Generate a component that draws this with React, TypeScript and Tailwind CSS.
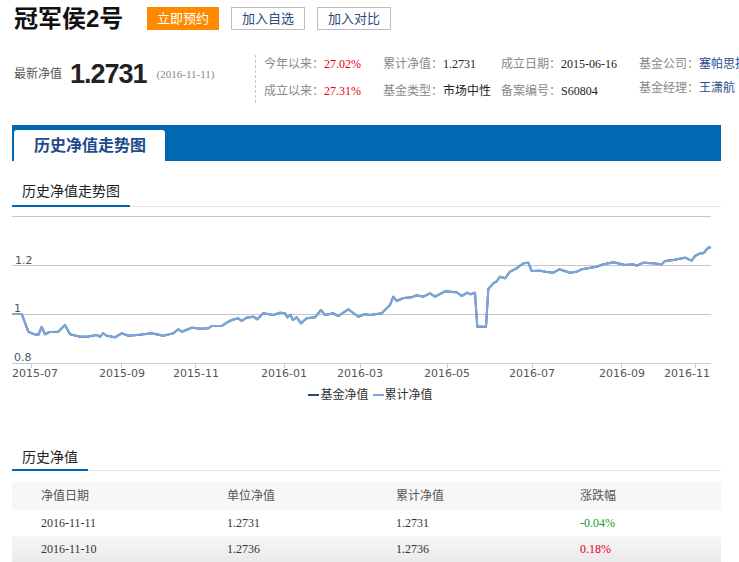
import React from "react";

const SANS = { fontFamily: '"Liberation Sans", "Noto Sans CJK SC", sans-serif' };
const SERIF = { fontFamily: '"Liberation Serif", "Noto Sans CJK SC", serif' };
const CHART_FONT = '"DejaVu Sans", "Noto Sans CJK SC", sans-serif';

// traced from the reference, page pixel coordinates
const POINTS: [number, number][] = [
  [12, 314], [21.7, 314], [28.3, 331.7], [33.3, 334], [38.3, 335], [41.7, 327], [45, 334.3],
  [49.3, 332], [58.3, 331.7], [65, 325], [70, 334.3], [80, 336.7], [86.7, 336.7], [96.7, 335],
  [100, 336.7], [103.3, 333.3], [106.7, 335.7], [115, 337.3], [121.7, 333.3], [128.3, 335.7],
  [140, 334.7], [151.7, 333.3], [163.3, 335.7], [173.3, 333.3], [178.3, 329.3], [181.7, 331.7],
  [191.7, 327.7], [200, 328.7], [208.3, 328.3], [211.7, 326], [221.7, 326], [226.7, 322.7],
  [231.7, 320], [238.3, 318.3], [241.7, 321], [246.7, 317.7], [253.3, 316.7], [257.3, 319.3],
  [263.3, 313.3], [273.3, 315], [280, 312.7], [285, 313.3], [287.3, 317.3], [290.7, 314.7],
  [292.7, 320], [296.7, 317.3], [301, 323.3], [306.7, 318.3], [315, 317.3], [321, 310],
  [325, 315], [333.3, 313.3], [338.3, 316], [348.3, 309.3], [358.3, 316.7], [365, 314],
  [370, 315], [381.7, 313.3], [390, 305], [393.3, 296.7], [396.7, 301], [403.3, 298],
  [411.7, 297.3], [416.7, 295.3], [423.3, 296.7], [430, 293.3], [435, 296.7], [445, 291.3],
  [456.7, 292.3], [461.7, 296], [467.3, 292.7], [470.7, 294.3], [475, 292.7], [477.3, 326.7],
  [486, 326.7], [488.3, 289], [493.3, 283.3], [496.7, 281.3], [500, 276.7], [505, 278.3],
  [510, 271.7], [516.7, 268.3], [523.3, 263.3], [528.3, 262.7], [531.7, 271], [540, 270.7],
  [546.7, 272], [553.3, 272.7], [559.3, 269.3], [570, 272.7], [576.7, 271.7], [581.7, 269.3],
  [596.7, 266.7], [603.3, 264.3], [613.3, 262.3], [618.3, 263.3], [625, 265], [633.3, 264.3],
  [636.7, 265.7], [643.3, 262.7], [653.3, 263.3], [661.7, 264.3], [665, 261], [673.3, 260],
  [685, 257.7], [691.7, 260.7], [695, 256], [700, 253.3], [703.3, 253.3], [708.3, 247.7],
  [711, 247.3],
];

const TICKS: { x: number; label: string; anchor: "start" | "middle" | "end"; tx: number }[] = [
  { x: 31, label: "2015-07", anchor: "start", tx: 12 },
  { x: 121, label: "2015-09", anchor: "middle", tx: 122 },
  { x: 195, label: "2015-11", anchor: "middle", tx: 196 },
  { x: 284, label: "2016-01", anchor: "middle", tx: 284 },
  { x: 360, label: "2016-03", anchor: "middle", tx: 360 },
  { x: 447, label: "2016-05", anchor: "middle", tx: 447 },
  { x: 532, label: "2016-07", anchor: "middle", tx: 532 },
  { x: 621, label: "2016-09", anchor: "middle", tx: 622 },
  { x: 695, label: "2016-11", anchor: "end", tx: 710 },
];

const ROWS = [
  { date: "2016-11-11", unit: "1.2731", total: "1.2731", change: "-0.04%", up: false },
  { date: "2016-11-10", unit: "1.2736", total: "1.2736", change: "0.18%", up: true },
];

function InfoItem({ label, value, tone }: { label: string; value: string; tone: "red" | "dark" | "cjk" | "blue" }) {
  const color =
    tone === "red" ? "text-[#e60012]" : tone === "blue" ? "text-[#1f4e8c]" : "text-[#222]";
  return (
    <div className="flex h-[18px] items-center whitespace-nowrap text-[12px]">
      <span className="w-[60px] shrink-0 text-[#888]" style={SANS}>{label}</span>
      <span className={color} style={tone === "cjk" || tone === "blue" ? SANS : SERIF}>{value}</span>
    </div>
  );
}

function NavChart() {
  const d = POINTS.map((p, i) => `${i ? "L" : "M"}${p[0]} ${p[1]}`).join(" ");
  return (
    <svg width={709} height={173} viewBox="12 207 709 173" className="block">
      {[216, 265, 314].map((y) => (
        <line key={y} x1={12} x2={711} y1={y + 0.5} y2={y + 0.5} stroke="#c6c6c6" strokeWidth={1} />
      ))}
      <line x1={12} x2={711} y1={363.5} y2={363.5} stroke="#c0d0e0" strokeWidth={1} />
      {TICKS.map((t) => (
        <line key={t.x} x1={t.x + 0.5} x2={t.x + 0.5} y1={363} y2={368} stroke="#c0d0e0" strokeWidth={1} />
      ))}
      <g fontFamily={CHART_FONT} fontSize={11} fill="#555">
        <text x={15} y={264}>1.2</text>
        <text x={14} y={312}>1</text>
        <text x={14} y={361}>0.8</text>
        {TICKS.map((t) => (
          <text key={t.label} x={t.tx} y={377} textAnchor={t.anchor}>{t.label}</text>
        ))}
      </g>
      <path d={d} fill="none" stroke="#2f4a6e" strokeWidth={2} strokeLinejoin="round" />
      <path d={d} fill="none" stroke="#7ba5dc" strokeWidth={2.2} strokeLinejoin="round" />
    </svg>
  );
}

export default function App() {
  return (
    <div className="h-[562px] w-[739px] overflow-hidden bg-white" style={SANS}>
      {/* header */}
      <div className="flex items-center pl-[14px] pt-[7px]">
        <div className="w-[133px] shrink-0 text-[24px] font-bold leading-[23px] text-[#111]">冠军侯2号</div>
        <button className="flex h-[23px] w-[72px] shrink-0 items-center justify-center bg-[#ff8a00] text-[13px] text-white">
          立即预约
        </button>
        <button className="ml-[12px] flex h-[23px] w-[74px] shrink-0 items-center justify-center border border-[#bdbdbd] text-[13px] text-[#2b4c7e]">
          加入自选
        </button>
        <button className="ml-[12px] flex h-[23px] w-[74px] shrink-0 items-center justify-center border border-[#bdbdbd] text-[13px] text-[#2b4c7e]">
          加入对比
        </button>
      </div>

      {/* summary */}
      <div className="mt-[25px] flex w-max pl-[14px]">
        <div className="mt-[3px] flex h-[32px] w-[241px] shrink-0 items-center">
          <span className="text-[12px] text-[#555]">最新净值</span>
          <span className="ml-[8px] text-[27px] font-bold tracking-[-1px] text-[#222]">1.2731</span>
          <span className="ml-[10px] text-[11px] text-[#888]" style={SERIF}>(2016-11-11)</span>
        </div>
        <div className="flex h-[48px] shrink-0 border-l border-dashed border-[#c8c8c8] pl-[8px]">
          <div className="flex w-[119px] shrink-0 flex-col gap-[9px]">
            <InfoItem label="今年以来：" value="27.02%" tone="red" />
            <InfoItem label="成立以来：" value="27.31%" tone="red" />
          </div>
          <div className="flex w-[118px] shrink-0 flex-col gap-[9px]">
            <InfoItem label="累计净值：" value="1.2731" tone="dark" />
            <InfoItem label="基金类型：" value="市场中性" tone="cjk" />
          </div>
          <div className="flex w-[138px] shrink-0 flex-col gap-[9px]">
            <InfoItem label="成立日期：" value="2015-06-16" tone="dark" />
            <InfoItem label="备案编号：" value="S60804" tone="dark" />
          </div>
          <div className="flex shrink-0 flex-col gap-[6px]">
            <InfoItem label="基金公司：" value="塞帕思投资" tone="blue" />
            <InfoItem label="基金经理：" value="王潇航" tone="blue" />
          </div>
        </div>
      </div>

      {/* tab bar */}
      <div className="ml-[12px] mt-[22px] flex h-[36px] w-[709px] items-end bg-[#0069b2] pl-[2px]">
        <div className="flex h-[31px] w-[151px] items-center rounded-t-[3px] bg-white pl-[20px] text-[16px] font-bold text-[#1d4a8a]">
          历史净值走势图
        </div>
      </div>

      {/* chart block */}
      <div className="ml-[12px] w-[709px]">
        <div className="flex h-[46px] items-end border-b border-[#e3e3e3]">
          <div className="-mb-px w-[118px] border-b-2 border-[#0069b2] pb-[4px] pl-[10px] text-[14px] leading-[20px] text-[#222]">
            历史净值走势图
          </div>
        </div>
        <NavChart />
        <div
          className="flex h-[30px] items-center justify-center gap-[4px] pl-[8px] text-[12px] text-[#333]"
          style={{ fontFamily: CHART_FONT }}
        >
          <span className="flex items-center">
            <span className="mr-px inline-block h-[2px] w-[11px] bg-[#2f4a6e]" />
            基金净值
          </span>
          <span className="flex items-center">
            <span className="mr-px inline-block h-[2px] w-[11px] bg-[#7ba5dc]" />
            累计净值
          </span>
        </div>
      </div>

      {/* history table */}
      <div className="ml-[12px] w-[709px]">
        <div className="mt-[37px] flex items-end border-b border-[#e3e3e3]">
          <div className="-mb-px w-[76px] border-b-2 border-[#0069b2] pb-[2px] pl-[10px] text-[14px] leading-[20px] text-[#222]">
            历史净值
          </div>
        </div>
        <table className="mt-[11px] w-full border-collapse text-left text-[12px]">
          <thead>
            <tr className="h-[28px] bg-[#f7f7f7] text-[#555]">
              <th className="w-[215px] pl-[29px] font-normal">净值日期</th>
              <th className="w-[169px] pl-0 font-normal">单位净值</th>
              <th className="w-[184px] pl-0 font-normal">累计净值</th>
              <th className="pl-0 font-normal">涨跌幅</th>
            </tr>
          </thead>
          <tbody style={SERIF}>
            {ROWS.map((r, i) => (
              <tr
                key={r.date}
                className={
                  i % 2
                    ? "h-[26px] bg-gradient-to-b from-[#f6f6f6] to-[#eaeaea] text-[#333]"
                    : "h-[26px] bg-white text-[#333]"
                }
              >
                <td className="pl-[29px]">{r.date}</td>
                <td>{r.unit}</td>
                <td>{r.total}</td>
                <td className={r.up ? "text-[#e60012]" : "text-[#1a9a2a]"}>{r.change}</td>
              </tr>
            ))}
          </tbody>
        </table>
      </div>
    </div>
  );
}
